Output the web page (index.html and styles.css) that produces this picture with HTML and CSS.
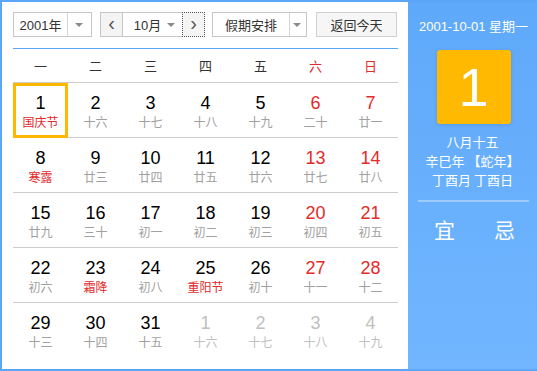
FILE: index.html
```html
<!DOCTYPE html>
<html lang="zh-CN">
<head>
  <meta charset="UTF-8" />
  <title>万年历</title>
  <link rel="stylesheet" href="styles.css">
</head>
<body>
  <div class="calendar">
    <div class="main">
      <div class="toolbar">
        <div class="select year">
          <span class="select-text">2001年</span>
          <span class="select-arrow"></span>
        </div>
        <div class="month-group">
          <span class="nav-btn">&lsaquo;</span>
          <div class="select month">
            <span class="select-text">10月</span>
            <span class="select-arrow"></span>
          </div>
          <span class="nav-btn focused">&rsaquo;</span>
        </div>
        <div class="select holiday">
          <span class="select-text">假期安排</span>
          <span class="select-arrow"></span>
        </div>
        <span class="today-btn">返回今天</span>
      </div>

      <div class="weekdays">
        <span>一</span><span>二</span><span>三</span><span>四</span><span>五</span>
        <span class="weekend">六</span><span class="weekend">日</span>
      </div>

      <div class="days">
        <div class="day selected"><b>1</b><i class="fest">国庆节</i></div>
        <div class="day"><b>2</b><i>十六</i></div>
        <div class="day"><b>3</b><i>十七</i></div>
        <div class="day"><b>4</b><i>十八</i></div>
        <div class="day"><b>5</b><i>十九</i></div>
        <div class="day weekend"><b>6</b><i>二十</i></div>
        <div class="day weekend"><b>7</b><i>廿一</i></div>

        <div class="day"><b>8</b><i class="fest">寒露</i></div>
        <div class="day"><b>9</b><i>廿三</i></div>
        <div class="day"><b>10</b><i>廿四</i></div>
        <div class="day"><b>11</b><i>廿五</i></div>
        <div class="day"><b>12</b><i>廿六</i></div>
        <div class="day weekend"><b>13</b><i>廿七</i></div>
        <div class="day weekend"><b>14</b><i>廿八</i></div>

        <div class="day"><b>15</b><i>廿九</i></div>
        <div class="day"><b>16</b><i>三十</i></div>
        <div class="day"><b>17</b><i>初一</i></div>
        <div class="day"><b>18</b><i>初二</i></div>
        <div class="day"><b>19</b><i>初三</i></div>
        <div class="day weekend"><b>20</b><i>初四</i></div>
        <div class="day weekend"><b>21</b><i>初五</i></div>

        <div class="day"><b>22</b><i>初六</i></div>
        <div class="day"><b>23</b><i class="fest">霜降</i></div>
        <div class="day"><b>24</b><i>初八</i></div>
        <div class="day"><b>25</b><i class="fest">重阳节</i></div>
        <div class="day"><b>26</b><i>初十</i></div>
        <div class="day weekend"><b>27</b><i>十一</i></div>
        <div class="day weekend"><b>28</b><i>十二</i></div>

        <div class="day"><b>29</b><i>十三</i></div>
        <div class="day"><b>30</b><i>十四</i></div>
        <div class="day"><b>31</b><i>十五</i></div>
        <div class="day other"><b>1</b><i>十六</i></div>
        <div class="day other"><b>2</b><i>十七</i></div>
        <div class="day other"><b>3</b><i>十八</i></div>
        <div class="day other"><b>4</b><i>十九</i></div>
      </div>
    </div>

    <div class="side">
      <p class="side-date">2001-10-01 星期一</p>
      <div class="side-day">1</div>
      <p class="side-lunar">八月十五</p>
      <p class="side-lunar">辛巳年 【蛇年】</p>
      <p class="side-lunar">丁酉月 丁酉日</p>
      <div class="side-line"></div>
      <div class="side-yiji">
        <span>宜</span>
        <span>忌</span>
      </div>
    </div>
  </div>
</body>
</html>
```

FILE: styles.css
```css
* {
  margin: 0;
  padding: 0;
  box-sizing: border-box;
}

body {
  font-family: "Liberation Sans", "Noto Sans CJK SC", sans-serif;
  background: #fff;
}

.calendar {
  width: 537px;
  height: 371px;
  border: 2px solid #5ca6f7;
  border-right: none;
  display: flex;
}

.main {
  width: 406px;
  padding: 10px 0 0 11px;
}

/* toolbar */
.toolbar {
  display: flex;
  height: 25px;
  width: 385px;
}

.select {
  display: flex;
  height: 25px;
  border: 1px solid #c6c6c6;
  background: #fff;
  font-size: 13px;
  color: #333;
}

.select-text {
  flex: 1;
  display: flex;
  align-items: center;
  justify-content: center;
  border-right: 1px solid #d6d6d6;
}

.select-arrow {
  width: 23px;
  position: relative;
}

.select-arrow::after {
  content: "";
  position: absolute;
  left: 7px;
  top: 10px;
  border-left: 4px solid transparent;
  border-right: 4px solid transparent;
  border-top: 4px solid #8a8a8a;
}

.year {
  width: 79px;
}

.month-group {
  display: flex;
  margin-left: 8px;
  width: 105px;
}

.nav-btn {
  width: 23px;
  height: 25px;
  display: flex;
  align-items: center;
  justify-content: center;
  border: 1px solid #c6c6c6;
  background: #f4f4f4;
  color: #555;
  font-size: 20px;
  line-height: 1;
  padding-bottom: 3px;
}

.nav-btn.focused {
  border: 1px dotted #555;
}

.month {
  width: 59px;
  border-left: none;
  border-right: none;
}

.month .select-text {
  border-right: none;
  padding-left: 8px;
}

.month .select-arrow {
  width: 18px;
}

.month .select-arrow::after {
  left: 3px;
}

.holiday {
  width: 95px;
  margin-left: 7px;
}

.holiday .select-arrow {
  width: 16px;
}

.holiday .select-arrow::after {
  left: 3px;
}

.today-btn {
  width: 81px;
  margin-left: 9px;
  display: flex;
  align-items: center;
  justify-content: center;
  border: 1px solid #d0d0d0;
  background: #f6f6f6;
  font-size: 13px;
  color: #333;
}

/* grid */
.weekdays {
  display: grid;
  grid-template-columns: repeat(7, 55px);
  margin-top: 11px;
  border-top: 1px solid #5ca6f7;
  border-bottom: 1px solid #cccccc;
  height: 35px;
  align-items: center;
  font-family: "Noto Sans CJK SC", sans-serif;
  font-size: 13px;
  color: #333;
  text-align: center;
  width: 385px;
}

.weekdays .weekend {
  color: #e02c2c;
}

.days {
  display: grid;
  grid-template-columns: repeat(7, 55px);
  grid-auto-rows: 55px;
  width: 385px;
}

.day {
  display: flex;
  flex-direction: column;
  align-items: center;
  padding-top: 10px;
  border-bottom: 1px solid #cccccc;
}

.day:nth-last-child(-n+7) {
  border-bottom: none;
}

.day b {
  font-weight: normal;
  font-size: 18px;
  line-height: 20px;
  color: #000;
}

.day i {
  font-style: normal;
  font-family: "Noto Sans CJK SC", sans-serif;
  font-size: 12px;
  line-height: 17px;
  color: #a0a0a0;
}

.day.weekend b {
  color: #e52a2a;
}

.day i.fest {
  color: #e52a2a;
}

.day.other b,
.day.other i {
  color: #c0c0c0;
}

.day.selected {
  border: 3px solid #ffb800;
  padding-top: 7px;
}

/* side panel */
.side {
  flex: 1;
  background: linear-gradient(to bottom, #5fa9fa, #71b6ff);
  color: #fff;
  text-align: center;
  font-family: "Liberation Sans", "Noto Sans CJK SC", sans-serif;
  padding-top: 16px;
}

.side-date {
  font-size: 13px;
  line-height: 18px;
  margin-left: 2px;
}

.side-day {
  width: 74px;
  height: 74px;
  margin: 14px auto 8px;
  background: #ffb900;
  border-radius: 3px;
  box-shadow: 0 1px 4px rgba(0, 0, 0, 0.12);
  font-size: 54px;
  line-height: 74px;
  font-weight: 300;
  position: relative;
  left: 1px;
}

.side-lunar {
  font-family: "Noto Sans CJK SC", sans-serif;
  font-size: 13px;
  line-height: 19px;
}

.side-line {
  height: 2px;
  margin: 11px 8px 0 10px;
  background: rgba(255, 255, 255, 0.35);
}

.side-yiji {
  display: flex;
  justify-content: space-between;
  padding: 12px 22px 0 26px;
  font-family: "Noto Sans CJK SC", sans-serif;
  font-size: 21px;
  line-height: 30px;
}
```
